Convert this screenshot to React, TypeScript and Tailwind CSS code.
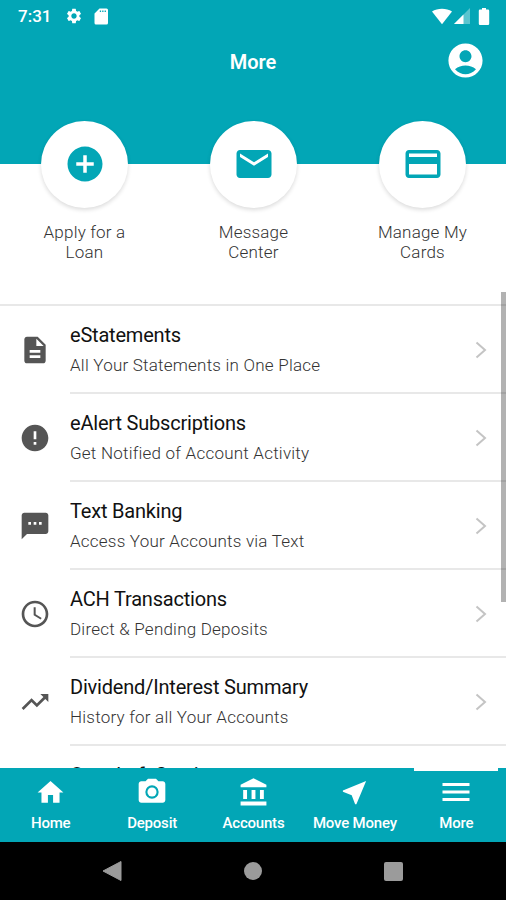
import type { IconType } from 'react-icons';
import {
  MdAccountBalance,
  MdAccountCircle,
  MdAddCircle,
  MdCreditCard,
  MdDescription,
  MdEmail,
  MdError,
  MdHome,
  MdMenu,
  MdNearMe,
  MdSchedule,
  MdSettings,
  MdSms,
  MdTrendingUp,
} from 'react-icons/md';

const shortcuts: { lines: [string, string]; icon: IconType }[] = [
  { lines: ['Apply for a', 'Loan'], icon: MdAddCircle },
  { lines: ['Message', 'Center'], icon: MdEmail },
  { lines: ['Manage My', 'Cards'], icon: MdCreditCard },
];

const menuItems: { title: string; subtitle: string; icon: IconType }[] = [
  { title: 'eStatements', subtitle: 'All Your Statements in One Place', icon: MdDescription },
  { title: 'eAlert Subscriptions', subtitle: 'Get Notified of Account Activity', icon: MdError },
  { title: 'Text Banking', subtitle: 'Access Your Accounts via Text', icon: MdSms },
  { title: 'ACH Transactions', subtitle: 'Direct & Pending Deposits', icon: MdSchedule },
  { title: 'Dividend/Interest Summary', subtitle: 'History for all Your Accounts', icon: MdTrendingUp },
];

const CameraIcon = ({ size = 30 }: { size?: number }) => (
  <svg width={size} height={size} viewBox="0 0 24 24" fill="currentColor">
    <path fillRule="evenodd" d="M9 2 7.17 4H4c-1.1 0-2 .9-2 2v12c0 1.1.9 2 2 2h16c1.1 0 2-.9 2-2V6c0-1.1-.9-2-2-2h-3.17L15 2H9zm3 15a5 5 0 1 1 0-10 5 5 0 0 1 0 10z" />
    <circle cx="12" cy="12" r="3.4" />
  </svg>
);

const tabs = [
  { label: 'Home', icon: <MdHome size={31} /> },
  { label: 'Deposit', icon: <CameraIcon size={32} /> },
  { label: 'Accounts', icon: <MdAccountBalance size={31} /> },
  { label: 'Move Money', icon: <MdNearMe size={31} /> },
  { label: 'More', icon: <MdMenu size={36} />, active: true },
];

function StatusBar() {
  return (
    <div className="flex h-8 items-center pl-[18px] pr-4">
      <span className="w-[47px] text-[17px] font-medium leading-none">7:31</span>
      <MdSettings size={18} />
      <svg className="ml-[11px]" width="15" height="17" viewBox="0 0 15 17" fill="currentColor">
        <path fillRule="evenodd" d="M5.5 0.5H12.5a1.5 1.5 0 0 1 1.5 1.5V15a1.5 1.5 0 0 1-1.5 1.5H2A1.5 1.5 0 0 1 .5 15V5.5zM5.8 2.5v1.6h1.3v-1.6zM8.2 2.5v1.6h1.3v-1.6zM10.6 2.5v1.6h1.3v-1.6z" />
      </svg>
      <div className="ml-auto flex items-center">
        <svg width="20" height="17" viewBox="0 0 20 17" fill="currentColor">
          <path d="M0 3.4C5.5-.3 14.5-.3 20 3.4L10 16.2z" />
        </svg>
        <svg className="ml-[2px]" width="16" height="16" viewBox="0 0 16 16" fill="currentColor">
          <path d="M0 16 16 0v16z" opacity="0.35" />
          <path d="M0 16 9.5 6.5V16z" />
        </svg>
        <svg className="ml-2" width="12" height="17" viewBox="0 0 12 17" fill="currentColor">
          <path d="M4 0h4v1.6h2A1.2 1.2 0 0 1 11.2 2.8v13A1.2 1.2 0 0 1 10 17H2A1.2 1.2 0 0 1 .8 15.8v-13A1.2 1.2 0 0 1 2 1.6h2z" />
        </svg>
      </div>
    </div>
  );
}

export default function App() {
  return (
    <div className="relative flex h-[900px] w-[506px] flex-col overflow-hidden bg-white font-['Roboto',sans-serif]">
      <header className="h-[164px] shrink-0 bg-[#02a6b6] text-white">
        <StatusBar />
        <div className="grid h-[57px] grid-cols-3 items-center px-5">
          <h1 className="col-start-2 mt-[3px] text-center text-[20px] font-semibold leading-none">More</h1>
          <MdAccountCircle size={41} className="justify-self-end" />
        </div>
      </header>

      <section className="relative -mr-px -mt-[43px] grid h-[185px] shrink-0 grid-cols-3 border-b-2 border-[#e8e8e8]">
        {shortcuts.map(({ lines, icon: Icon }) => (
          <div key={lines[0]} className="flex flex-col items-center">
            <div className="flex size-[87px] items-center justify-center rounded-full bg-white pb-px text-[#02a6b6] shadow-[0_2px_4px_rgba(0,0,0,0.14)]">
              <Icon size={42} />
            </div>
            <p className="mt-[14px] text-center text-[17px] font-light leading-[20px] tracking-[0.2px] text-[#333]">
              {lines[0]}
              <br />
              {lines[1]}
            </p>
          </div>
        ))}
      </section>

      <main className="min-h-0 flex-1 overflow-hidden">
        {menuItems.map(({ title, subtitle, icon: Icon }) => (
          <div key={title} className="flex h-[88px] items-center">
            <div className="flex w-[70px] justify-center text-[#555]">
              <Icon size={32} />
            </div>
            <div className="flex h-full flex-1 items-center border-b-2 border-[#e8e8e8]">
              <div className="flex-1 pt-0.5">
                <h2 className="text-[20px] leading-[28px] tracking-[-0.2px] text-[#111]">{title}</h2>
                <p className="mt-[2px] text-[17px] font-light leading-[28px] tracking-[0.22px] text-[#333]">{subtitle}</p>
              </div>
              <svg className="mr-[18px] mt-[2px]" width="14" height="18" viewBox="0 0 14 18" fill="none" stroke="#c4c4c4" strokeWidth="2">
                <path d="M2.5 1.5 11 9l-8.500 7.500" />
              </svg>
            </div>
          </div>
        ))}
        <div className="pl-[70px] pt-[15px]">
          <h2 className="text-[20px] leading-[28px] tracking-[-0.2px] text-[#111]">Overdraft Services</h2>
        </div>
      </main>

      <div className="absolute right-0 top-[292px] h-[310px] w-[5px] bg-black/30" />

      <nav className="-mr-px grid h-[74px] shrink-0 grid-cols-5 bg-[#02a6b6] text-white">
        {tabs.map((tab) => (
          <div key={tab.label} className="relative flex flex-col items-center">
            {tab.active && <div className="absolute top-0 h-[3px] w-[84px] bg-white" />}
            <div className="flex h-[48px] items-center justify-center">{tab.icon}</div>
            <span className="whitespace-nowrap text-[15px] font-medium leading-[14px] tracking-[-0.2px]">{tab.label}</span>
          </div>
        ))}
      </nav>

      <footer className="flex h-[58px] shrink-0 items-center justify-between bg-black pl-[102px] pr-[103px] text-[#9b9b9b]">
        <svg width="20" height="22" viewBox="0 0 20 22" fill="currentColor">
          <path d="M19 1.5v19L1 11z" stroke="currentColor" strokeLinejoin="round" />
        </svg>
        <div className="size-[18px] rounded-full bg-[#9b9b9b]" />
        <div className="size-[19px] rounded-[2px] bg-[#9b9b9b]" />
      </footer>
    </div>
  );
}
